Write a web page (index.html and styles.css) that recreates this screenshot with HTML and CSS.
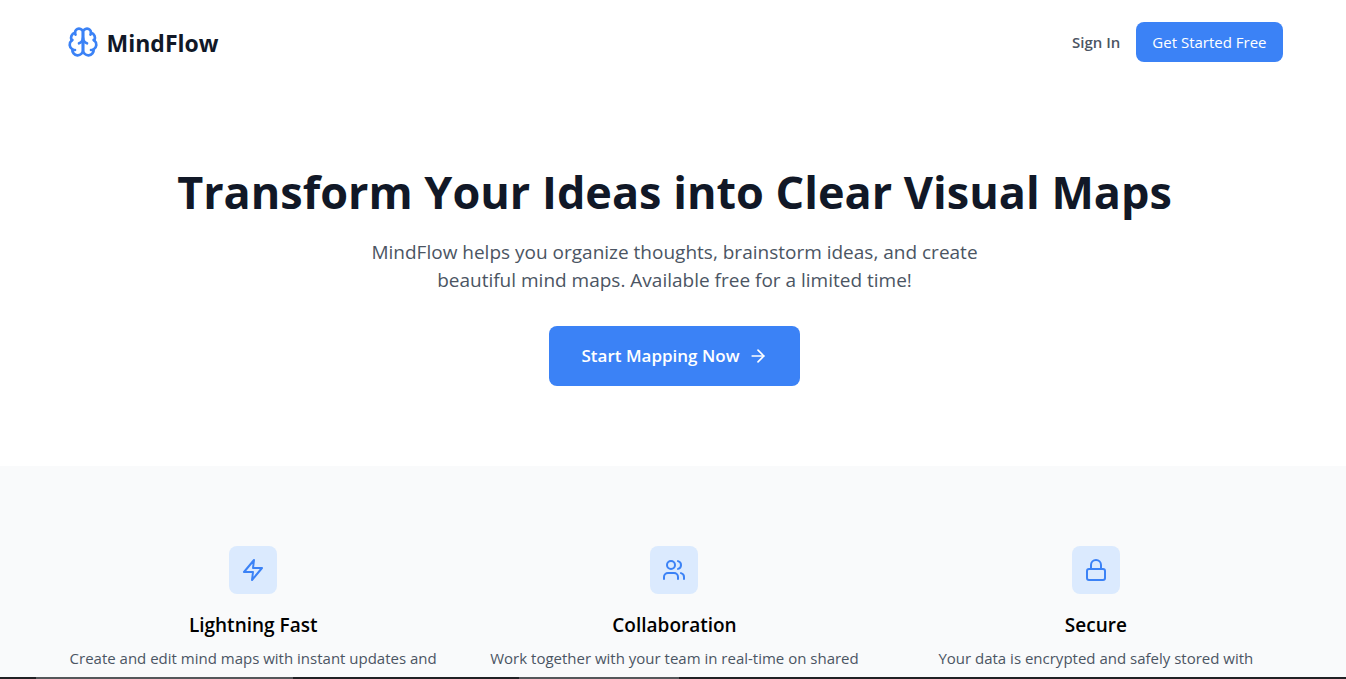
FILE: index.html
```html
<!DOCTYPE html>
<html lang="en">
<head>
<meta charset="utf-8">
<meta name="viewport" content="width=device-width, initial-scale=1">
<title>MindFlow</title>
<link rel="stylesheet" href="styles.css">
</head>
<body>
<header class="band site-header">
  <div class="container header-row">
    <a class="brand" href="#">
      <svg class="icon brand-icon" viewBox="0 0 24 24" aria-hidden="true"><path d="M12 5a3 3 0 1 0-5.997.125 4 4 0 0 0-2.526 5.77 4 4 0 0 0 .556 6.588A4 4 0 1 0 12 18Z"/><path d="M12 5a3 3 0 1 1 5.997.125 4 4 0 0 1 2.526 5.77 4 4 0 0 1-.556 6.588A4 4 0 1 1 12 18Z"/><path d="M15 13a4.5 4.5 0 0 1-3-4 4.5 4.5 0 0 1-3 4"/><path d="M17.599 6.5a3 3 0 0 0 .399-1.375"/><path d="M6.003 5.125A3 3 0 0 0 6.401 6.5"/><path d="M3.477 10.896a4 4 0 0 1 .585-.396"/><path d="M19.938 10.5a4 4 0 0 1 .585.396"/><path d="M6 18a4 4 0 0 1-1.967-.516"/><path d="M19.967 17.484A4 4 0 0 1 18 18"/></svg>
      <span class="brand-name">MindFlow</span>
    </a>
    <nav class="actions">
      <button class="sign-in" type="button">Sign In</button>
      <button class="button" type="button">Get Started Free</button>
    </nav>
  </div>
</header>
<main>
  <section class="band hero">
    <div class="container hero-body">
      <h1 class="hero-title">Transform Your Ideas into Clear Visual Maps</h1>
      <p class="hero-text">MindFlow helps you organize thoughts, brainstorm ideas, and create beautiful mind maps. Available free for a limited time!</p>
      <button class="button button-large" type="button">Start Mapping Now
        <svg class="icon arrow-icon" viewBox="0 0 24 24" aria-hidden="true"><path d="M5 12h14"/><path d="m12 5 7 7-7 7"/></svg>
      </button>
    </div>
  </section>
  <section class="band features">
    <div class="container feature-grid">
      <article class="feature">
        <div class="feature-badge"><svg class="icon" viewBox="0 0 24 24" aria-hidden="true"><path d="M13 2 3 14h9l-1 8 10-12h-9l1-8z"/></svg></div>
        <h2 class="feature-title">Lightning Fast</h2>
        <p class="feature-text">Create and edit mind maps with instant updates and smooth interactions</p>
      </article>
      <article class="feature">
        <div class="feature-badge"><svg class="icon" viewBox="0 0 24 24" aria-hidden="true"><path d="M16 21v-2a4 4 0 0 0-4-4H6a4 4 0 0 0-4 4v2"/><circle cx="9" cy="7" r="4"/><path d="M22 21v-2a4 4 0 0 0-3-3.87"/><path d="M16 3.13a4 4 0 0 1 0 7.75"/></svg></div>
        <h2 class="feature-title">Collaboration</h2>
        <p class="feature-text">Work together with your team in real-time on shared mind maps</p>
      </article>
      <article class="feature">
        <div class="feature-badge"><svg class="icon" viewBox="0 0 24 24" aria-hidden="true"><rect x="3" y="11" width="18" height="11" rx="2"/><path d="M7 11V7a5 5 0 0 1 10 0v4"/></svg></div>
        <h2 class="feature-title">Secure</h2>
        <p class="feature-text">Your data is encrypted and safely stored with enterprise-grade security</p>
      </article>
    </div>
  </section>
</main>
<div class="edge-bar" aria-hidden="true"></div>
</body>
</html>
```
FILE: styles.css
```css
* { box-sizing: border-box; }
html { height: 100%; overflow: hidden; }
body {
  height: 100%;
  margin: 0;
  overflow: hidden;
  background: #fff;
  color: #000;
  font-family: "Segoe UI", "Open Sans", "Noto Sans", sans-serif;
  font-size: 15px;
  line-height: 24px;
}
h1, h2, p { margin: 0; }
button { font: inherit; border: 0; cursor: pointer; }

.band { padding: 0 32px 0 35px; }
.container { max-width: 1216px; margin: 0 auto; }
.icon {
  width: 24px;
  height: 24px;
  flex: none;
  fill: none;
  stroke: currentColor;
  stroke-width: 2;
  stroke-linecap: round;
  stroke-linejoin: round;
}

.site-header { padding-top: 22px; padding-bottom: 22px; }
.header-row { display: flex; align-items: center; justify-content: space-between; }
.brand { display: flex; align-items: center; gap: 8px; color: #111827; text-decoration: none; }
.brand-icon { width: 32px; height: 32px; color: #3b82f6; }
.brand-name { padding-top: 2px; font-size: 23px; font-weight: 700; line-height: 32px; }
.actions { display: flex; align-items: center; gap: 16px; }
.sign-in { padding: 0; background: none; color: #4b5563; font-weight: 600; }
.button { padding: 8px 16px; border-radius: 8px; background: #3b82f6; color: #fff; }

.hero { padding-top: 82px; padding-bottom: 80px; }
.hero-body { display: flex; flex-direction: column; align-items: center; text-align: center; }
.hero-title { margin-bottom: 20px; color: #111827; font-size: 45px; font-weight: 700; line-height: 52px; }
.hero-text { max-width: 672px; margin-bottom: 32px; color: #4b5563; font-size: 19px; line-height: 28px; }
.button-large {
  display: flex;
  align-items: center;
  gap: 8px;
  padding: 16px 32px;
  font-size: 17px;
  font-weight: 600;
  line-height: 28px;
}
.arrow-icon { width: 20px; height: 20px; }

.features { padding-top: 80px; padding-bottom: 80px; background: #f9fafb; }
.feature-grid { display: grid; grid-template-columns: repeat(3, 1fr); gap: 48px; }
.feature { display: flex; flex-direction: column; align-items: center; text-align: center; }
.feature-badge {
  display: flex;
  align-items: center;
  justify-content: center;
  width: 48px;
  height: 48px;
  margin-bottom: 16px;
  border-radius: 8px;
  background: #dbeafe;
  color: #3b82f6;
}
.feature-title { margin-bottom: 6px; font-size: 19px; font-weight: 600; line-height: 30px; }
.feature-text { color: #4b5563; }

.edge-bar {
  position: fixed;
  right: 0;
  bottom: 0;
  left: 0;
  height: 2px;
  background: linear-gradient(90deg, #202124 36px, #55575a 36px 293px, #202124 293px 519px, #55575a 519px 679px, #202124 679px);
}
```
